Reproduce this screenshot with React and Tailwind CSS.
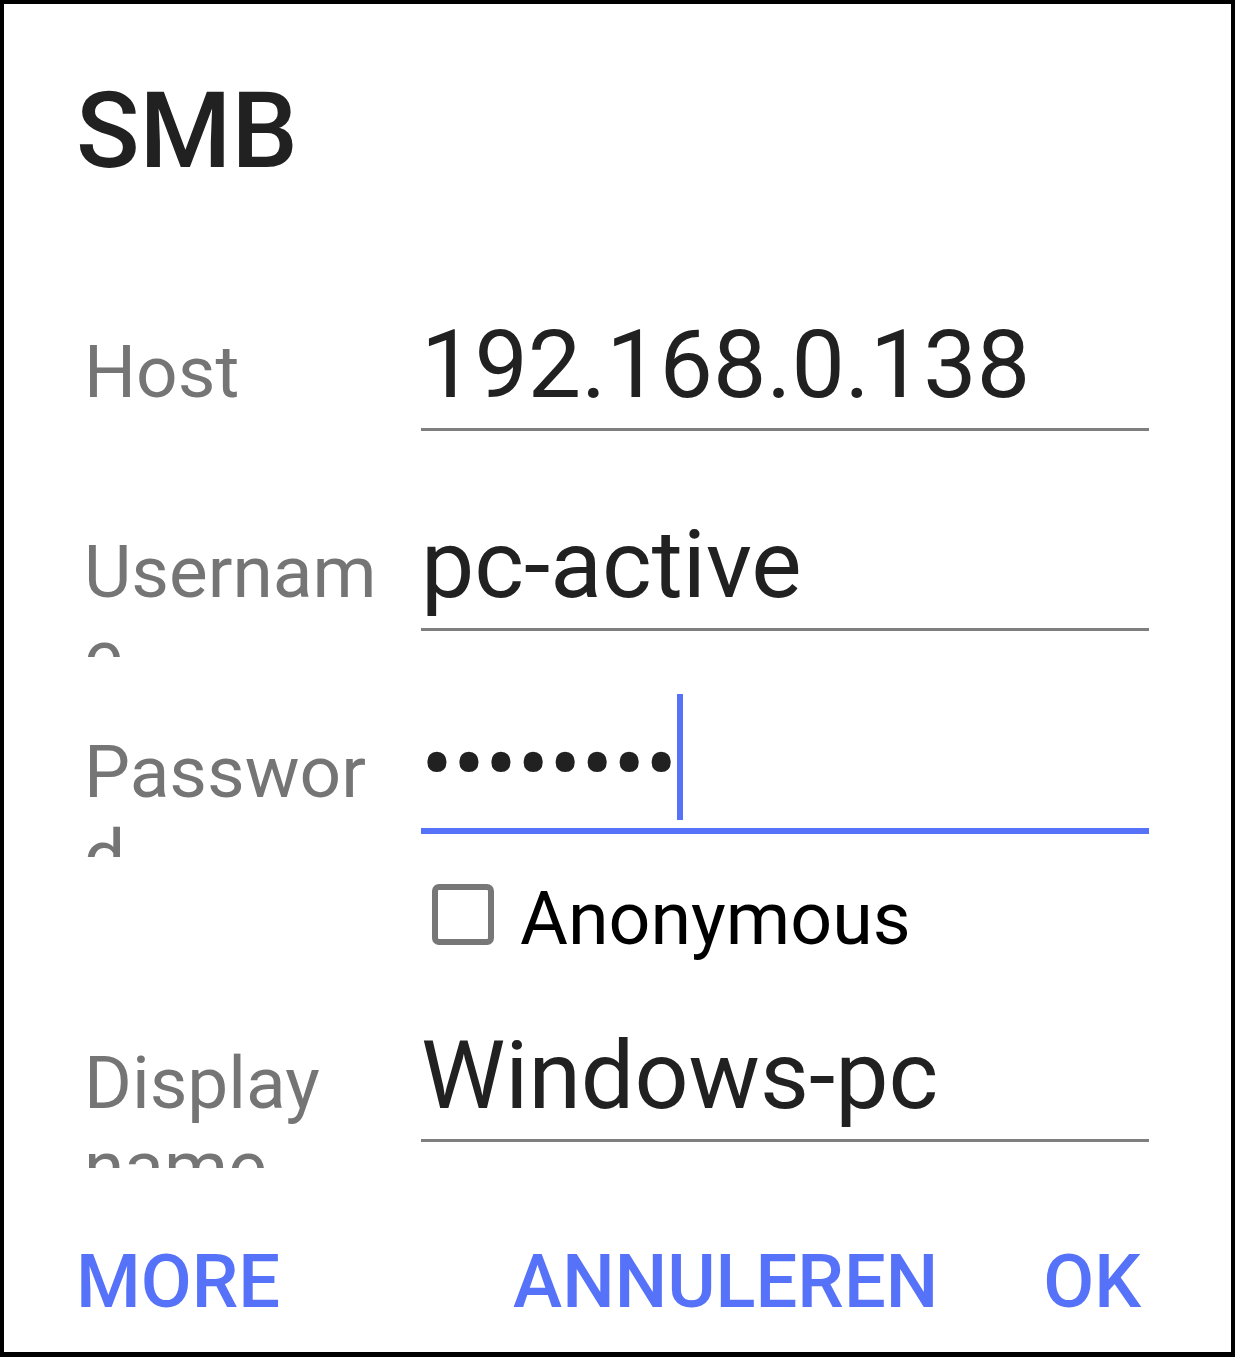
import React from 'react';

const fields = [
  { label: 'Host', value: '192.168.0.138', gap: 'mt-[116px]' },
  { label: 'Username', value: 'pc-active', gap: 'mt-[52px]' },
  { label: 'Password', value: '••••••••', gap: 'mt-[52px]', focused: true },
];

const FieldRow = ({ label, value, gap, focused }) => (
  <div className={`${gap} flex items-start gap-[27px]`}>
    <div className="mt-[21px] h-[127px] w-[310px] overflow-hidden break-words text-[73px] leading-[84px] text-[#757575]">{label}</div>
    <div
      className={`flex-1 pb-[8px] text-[95px] leading-[111px] text-[#212121] ${
        focused ? 'border-b-[6px] border-[#5672f8]' : 'border-b-[3px] border-[#7f7f7f]'
      }`}
    >
      <span className="relative whitespace-nowrap">
        {value}
        {focused && <span className="absolute left-full top-[-15px] h-[126px] w-[6px] bg-[#5672f8]" />}
      </span>
    </div>
  </div>
);

const App = () => {
  return (
    <div className="flex h-[1357px] w-[1235px] flex-col border-4 border-b-[5px] border-black bg-white font-[Roboto,sans-serif]">
      <h1 className="pl-[72px] pt-[66px] text-[105px] font-medium leading-[123px] text-[#212121]">SMB</h1>

      <div className="pl-[80px] pr-[82px]">
        {fields.map((field) => (
          <FieldRow key={field.label} {...field} />
        ))}

        <div className="ml-[337px] mt-[19px] flex items-start">
          <span className="mt-[8px] ml-[11px] h-[61px] w-[62px] rounded-[7px] border-[6px] border-[#777777]" />
          <span className="ml-[26px] text-[73.5px] leading-[87px] text-black">Anonymous</span>
        </div>

        <FieldRow label="Display name" value="Windows-pc" gap="mt-[57px]" />
      </div>

      <div className="mt-[70px] flex items-start justify-between pl-[72px] pr-[90px] text-[74px] font-medium leading-[87px] text-[#5672f8]">
        <button>MORE</button>
        <div className="flex gap-[105px]">
          <button>ANNULEREN</button>
          <button>OK</button>
        </div>
      </div>
    </div>
  );
};

export default App;
